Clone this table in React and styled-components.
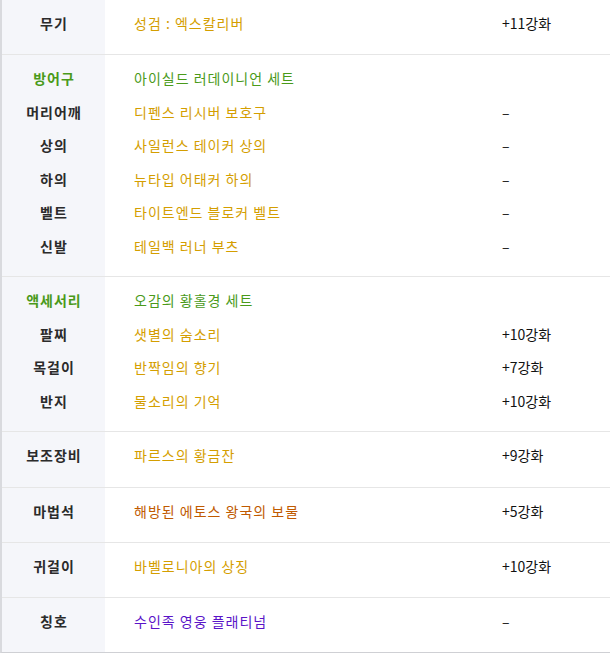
import React from "react";
import styled, { createGlobalStyle } from "styled-components";

const Global = createGlobalStyle`
  html, body { margin: 0; padding: 0; background: #fff; }
  body { font-family: "Noto Sans CJK KR", "Noto Sans", sans-serif; }
`;

const Table = styled.div`
  width: 608px;
  border-left: 2px solid #d9dade;
  border-bottom: 1px solid #cfd0d4;
  border-right: 1px solid #eeeeee;
  background: #fff;
`;

const Section = styled.div`
  display: grid;
  grid-template-columns: 103px 1fr;
  border-top: ${(p) => (p.$first ? "none" : "1px solid #e6e6e6")};
`;

const LabelCol = styled.div`
  background: #f5f6fa;
  padding: 6.5px 0 ${(p) => p.$bottom}px;
`;

const BodyCol = styled.div`
  padding: 6.5px 0 ${(p) => p.$bottom}px;
`;

const Line = styled.div`
  height: 33.5px;
  display: flex;
  align-items: center;
`;

const Label = styled(Line)`
  justify-content: center;
  font-weight: 700;
  font-size: 14px;
  letter-spacing: 1px;
  padding-left: 1px;
  color: ${(p) => (p.$set ? "#4a9a1a" : "#2b2b2b")};
`;

const ItemRow = styled(Line)`
  display: grid;
  grid-template-columns: 368px 1fr;
  align-items: center;
  padding-left: 29px;
  font-size: 14px;
`;

const ItemName = styled.span`
  color: ${(p) => p.$color};
  letter-spacing: 1px;
`;

const Enhance = styled.span`
  color: #111;
  font-size: 14px;
`;

const COLORS = {
  gold: "#d49e00",
  set: "#4a9a1a",
  orange: "#c05a00",
  purple: "#5a14c8",
};

const sections = [
  { bottom: 14, rows: [{ label: "무기", name: "성검 : 엑스칼리버", color: "gold", enh: "+11강화" }] },
  {
    bottom: 13.5,
    rows: [
      { label: "방어구", name: "아이실드 러데이니언 세트", color: "set", set: true, enh: "" },
      { label: "머리어깨", name: "디펜스 리시버 보호구", color: "gold", enh: "–" },
      { label: "상의", name: "사일런스 테이커 상의", color: "gold", enh: "–" },
      { label: "하의", name: "뉴타입 어태커 하의", color: "gold", enh: "–" },
      { label: "벨트", name: "타이트엔드 블로커 벨트", color: "gold", enh: "–" },
      { label: "신발", name: "테일백 러너 부츠", color: "gold", enh: "–" },
    ],
  },
  {
    bottom: 13.5,
    rows: [
      { label: "액세서리", name: "오감의 황홀경 세트", color: "set", set: true, enh: "" },
      { label: "팔찌", name: "샛별의 숨소리", color: "gold", enh: "+10강화" },
      { label: "목걸이", name: "반짝임의 향기", color: "gold", enh: "+7강화" },
      { label: "반지", name: "물소리의 기억", color: "gold", enh: "+10강화" },
    ],
  },
  { bottom: 15, rows: [{ label: "보조장비", name: "파르스의 황금잔", color: "gold", enh: "+9강화" }] },
  { bottom: 14, rows: [{ label: "마법석", name: "해방된 에토스 왕국의 보물", color: "orange", enh: "+5강화" }] },
  { bottom: 14, rows: [{ label: "귀걸이", name: "바벨로니아의 상징", color: "gold", enh: "+10강화" }] },
  { bottom: 14, rows: [{ label: "칭호", name: "수인족 영웅 플래티넘", color: "purple", enh: "–" }] },
];

export default function App() {
  return (
    <>
      <Global />
      <Table>
        {sections.map((s, i) => (
          <Section key={i} $first={i === 0}>
            <LabelCol $bottom={s.bottom}>
              {s.rows.map((r) => (
                <Label key={r.label} $set={r.set}>{r.label}</Label>
              ))}
            </LabelCol>
            <BodyCol $bottom={s.bottom}>
              {s.rows.map((r) => (
                <ItemRow key={r.label}>
                  <ItemName $color={COLORS[r.color]}>{r.name}</ItemName>
                  <Enhance>{r.enh}</Enhance>
                </ItemRow>
              ))}
            </BodyCol>
          </Section>
        ))}
      </Table>
    </>
  );
}
